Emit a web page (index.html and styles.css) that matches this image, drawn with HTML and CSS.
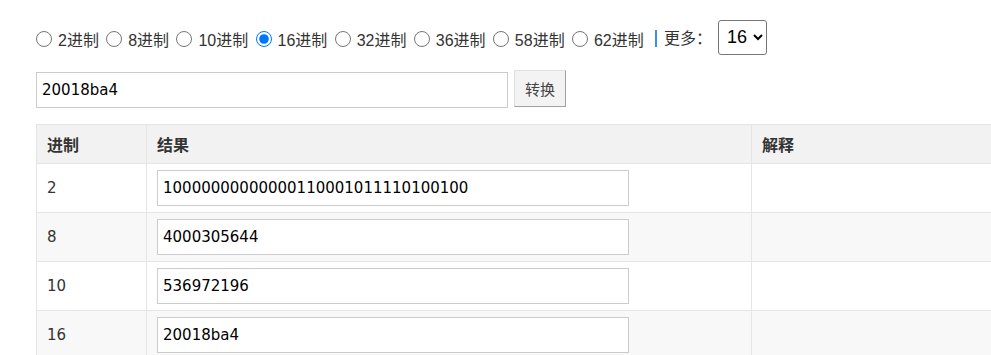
FILE: index.html
```html
<!DOCTYPE html>
<html>
  <head>
    <title>进制转换</title>
    <meta name="viewport" content="width=device-width, initial-scale=1" />
    <link rel="stylesheet" href="styles.css">
  </head>
  <body>
    <div class="wrap">
      <form id="form" class="radix-bar">
        <label><input type="radio" name="radix" value="2">2进制</label>
        <label><input type="radio" name="radix" value="8">8进制</label>
        <label><input type="radio" name="radix" value="10">10进制</label>
        <label><input type="radio" name="radix" value="16" checked>16进制</label>
        <label><input type="radio" name="radix" value="32">32进制</label>
        <label><input type="radio" name="radix" value="36">36进制</label>
        <label><input type="radio" name="radix" value="58">58进制</label>
        <label><input type="radio" name="radix" value="62">62进制</label>
        <span class="more">更多：</span>
        <select id="radix-more" class="radix-select">
          <option>2</option>
          <option>8</option>
          <option>10</option>
          <option selected>16</option>
          <option>32</option>
          <option>36</option>
        </select>
      </form>

      <div class="input-row">
        <input id="source" class="text-input" type="text" value="20018ba4" />
        <button id="convert" class="btn" type="button">转换</button>
      </div>

      <table class="result-table">
        <thead>
          <tr>
            <th class="col-radix">进制</th>
            <th class="col-result">结果</th>
            <th>解释</th>
          </tr>
        </thead>
        <tbody id="table-content">
          <tr>
            <td>2</td>
            <td><input class="text-input" type="text" value="10000000000000110001011110100100" /></td>
            <td></td>
          </tr>
          <tr>
            <td>8</td>
            <td><input class="text-input" type="text" value="4000305644" /></td>
            <td></td>
          </tr>
          <tr>
            <td>10</td>
            <td><input class="text-input" type="text" value="536972196" /></td>
            <td></td>
          </tr>
          <tr>
            <td>16</td>
            <td><input class="text-input" type="text" value="20018ba4" /></td>
            <td></td>
          </tr>
        </tbody>
      </table>
    </div>
  </body>
</html>
```

FILE: styles.css
```css
html, body {
  overflow: hidden;
}

body {
  margin: 0;
  font-family: "Liberation Sans", "Noto Sans CJK SC", sans-serif;
  font-size: 16px;
  color: #333;
  background-color: #fff;
}

.wrap {
  padding: 19px 0 0 36px;
  overflow: hidden;
}

.radix-bar {
  margin: 0;
  height: 36px;
  display: flex;
  align-items: center;
  white-space: nowrap;
}

.radix-bar label {
  display: inline-flex;
  align-items: center;
  margin-right: 7.3px;
  padding-top: 3px;
}

.radix-bar input[type="radio"] {
  width: 16px;
  height: 16px;
  margin: 0 6px 0 0;
}

.more {
  border-left: 2px solid #3a8ee6;
  padding-left: 7px;
  margin-left: 4px;
  margin-right: 6px;
  margin-top: 3px;
  line-height: 17px;
}

.radix-select {
  height: 35px;
  width: 49px;
  font-family: "Liberation Sans", sans-serif;
  font-size: 18px;
  color: #000;
  border: 1px solid #767676;
  border-radius: 3px;
  background-color: #fff;
  padding: 0 0 0 4px;
}

.input-row {
  display: flex;
  align-items: flex-start;
  gap: 6px;
  margin-top: 15px;
}

.input-row .text-input {
  margin-top: 2px;
}

.text-input {
  box-sizing: border-box;
  width: 472px;
  height: 36px;
  padding: 0 5px;
  border: 1px solid #ccc;
  font-family: "DejaVu Sans", sans-serif;
  font-size: 15px;
  color: #000;
  outline: none;
}

.btn {
  box-sizing: border-box;
  width: 52px;
  height: 37px;
  padding: 0;
  background-color: #f3f3f3;
  border: 1px solid #e0e0e0;
  border-right-color: #a0a0a0;
  border-bottom-color: #a0a0a0;
  font-family: "Noto Sans CJK SC", sans-serif;
  font-size: 15px;
  color: #444;
  cursor: pointer;
}

.result-table {
  width: 1100px;
  table-layout: fixed;
  border-collapse: collapse;
  margin-top: 16px;
}

.col-radix {
  width: 89px;
}

.col-result {
  width: 584px;
}

th, td {
  border: 1px solid #e5e5e5;
  text-align: left;
  padding: 6px 10px;
  height: 36px;
  font-family: "DejaVu Sans", "Noto Sans CJK SC", sans-serif;
  font-size: 15px;
}

th {
  background-color: #f2f2f2;
  font-family: "Noto Sans CJK SC", sans-serif;
  font-size: 16px;
  font-weight: bold;
  height: 26px;
}

tbody tr:nth-child(even) {
  background-color: #f8f8f8;
}
```
